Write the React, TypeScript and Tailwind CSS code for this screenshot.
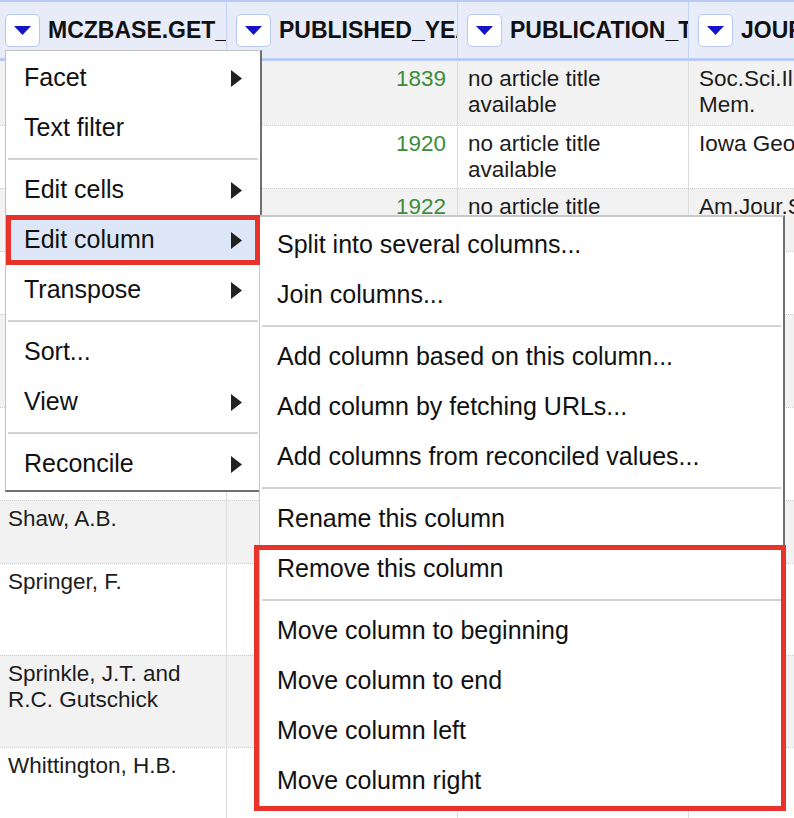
import React from 'react';

type Row = {
  h: string;
  gray: boolean;
  first?: boolean;
  name: string;
  year: string;
  title: string;
  journal: string;
};

const rows: Row[] = [
  { h: 'h-[64px]', gray: true, first: true, name: 'Owen, D.D.', year: '1839', title: 'no article title available', journal: 'Soc.Sci.Illinois Mem.' },
  { h: 'h-[63px]', gray: false, name: 'Weller, S.', year: '1920', title: 'no article title available', journal: 'Iowa Geol. Surv.' },
  { h: 'h-[63px]', gray: true, name: 'Weller, S.', year: '1922', title: 'no article title available', journal: 'Am.Jour.Sci.' },
  { h: 'h-[63px]', gray: false, name: 'Moore, R.C.', year: '1950', title: 'no article title available', journal: '' },
  { h: 'h-[93px]', gray: true, name: 'Ubaghs, G. and R.C. Moore', year: '1967', title: 'no article title available', journal: '' },
  { h: 'h-[93px]', gray: false, name: 'Bather, F.A. and E. Kirk', year: '1900', title: 'no article title available', journal: '' },
  { h: 'h-[63px]', gray: true, name: 'Shaw, A.B.', year: '', title: '', journal: '' },
  { h: 'h-[92px]', gray: false, name: 'Springer, F.', year: '', title: '', journal: '' },
  { h: 'h-[92px]', gray: true, name: 'Sprinkle, J.T. and R.C. Gutschick', year: '', title: '', journal: '' },
  { h: 'h-[92px]', gray: false, name: 'Whittington, H.B.', year: '', title: '', journal: '' },
];

const DownArrow = () => (
  <span className="flex h-[33px] w-[35px] shrink-0 items-center justify-center rounded-[5px] border border-[#b7c8f1] bg-white">
    <svg width="17" height="9" viewBox="0 0 17 9">
      <path d="M0 0H17L8.5 9Z" fill="#1414c6" />
    </svg>
  </span>
);

const RightArrow = () => (
  <svg width="11" height="17" viewBox="0 0 11 17">
    <path d="M0 0L11 8.5L0 17Z" fill="#222" />
  </svg>
);

const HeaderCell = ({ label, first, last }: { label: string; first?: boolean; last?: boolean }) => (
  <div
    className={`flex items-center gap-[8px] overflow-hidden whitespace-nowrap ${first ? 'pl-[5px]' : 'pl-[9px]'} ${last ? '' : 'border-r border-[#c4d3f5]'}`}
  >
    <DownArrow />
    <span className="text-[23px] font-bold text-[#111]">{label}</span>
  </div>
);

const Sep = ({ inset }: { inset: string }) => <div className={`${inset} my-[5px] h-[2px] bg-[#d2d2d2]`} />;

const MenuItem = ({ label, sub }: { label: string; sub?: boolean }) => (
  <div className="flex h-[50px] items-center justify-between pl-[18px] pr-[18px] text-[25px] text-[#111]">
    <span>{label}</span>
    {sub && <RightArrow />}
  </div>
);

const SubItem = ({ label }: { label: string }) => (
  <div className="flex h-[50px] items-center pl-[17px] text-[25px] text-[#111] whitespace-nowrap">{label}</div>
);

export default function App() {
  return (
    <div className="relative h-[818px] w-[794px] overflow-hidden bg-white font-['Liberation_Sans',Arial,sans-serif]">
      {/* table */}
      <div className="w-[889px]">
        <div className="grid h-[61px] grid-cols-[227px_231px_231px_200px] border-t-2 border-b-[3px] border-[#b9cbf4] bg-[#e8ebf8]">
          <HeaderCell label="MCZBASE.GET_AUTHORS" first />
          <HeaderCell label="PUBLISHED_YEAR" />
          <HeaderCell label="PUBLICATION_TITLE" />
          <HeaderCell label="JOURNAL_NAME" last />
        </div>
        {rows.map((r, i) => (
          <div
            key={i}
            className={`grid grid-cols-[227px_231px_231px_200px] text-[22.5px] leading-[26px] text-[#1c1c1c] ${r.h} ${r.gray ? 'bg-[#f2f2f2]' : 'bg-white'} ${r.first ? '' : 'border-t border-dotted border-[#c9c9c9]'}`}
          >
            <div className="overflow-hidden border-r border-[#dcdcdc] pl-[8px] pr-[8px] pt-[5px]">{r.name}</div>
            <div className="overflow-hidden border-r border-[#dcdcdc] pr-[11px] pt-[5px] text-right text-[#3d8c3a]">{r.year}</div>
            <div className="overflow-hidden border-r border-[#dcdcdc] pl-[10px] pr-[10px] pt-[5px]">{r.title}</div>
            <div className="overflow-hidden pl-[10px] pr-[10px] pt-[5px]">{r.journal}</div>
          </div>
        ))}
      </div>

      {/* column menu */}
      <div className="absolute left-[5px] top-[50px] w-[257px] border-t border-l border-r-2 border-b-2 border-t-[#c3c3c3] border-l-[#c3c3c3] border-r-[#6f6f6f] border-b-[#6f6f6f] bg-white pt-[2px] pb-[1px]">
        <MenuItem label="Facet" sub />
        <MenuItem label="Text filter" />
        <Sep inset="mx-[2px]" />
        <MenuItem label="Edit cells" sub />
        <div className="relative bg-[#dce6f6]">
          <MenuItem label="Edit column" sub />
          <span className="pointer-events-none absolute inset-0 z-20 border-[5px] border-[#e8332a]" />
        </div>
        <MenuItem label="Transpose" sub />
        <Sep inset="mx-[2px]" />
        <MenuItem label="Sort..." />
        <MenuItem label="View" sub />
        <Sep inset="mx-[2px]" />
        <MenuItem label="Reconcile" sub />
      </div>

      {/* edit column submenu */}
      <div className="absolute left-[259px] top-[215px] z-10 w-[526px] border-t-2 border-l border-r-2 border-b-2 border-t-[#c8c8c8] border-l-[#c8c8c8] border-r-[#6f6f6f] border-b-[#6f6f6f] bg-white pt-[3px] pb-[3px]">
        <SubItem label="Split into several columns..." />
        <SubItem label="Join columns..." />
        <Sep inset="mx-[2px]" />
        <SubItem label="Add column based on this column..." />
        <SubItem label="Add column by fetching URLs..." />
        <SubItem label="Add columns from reconciled values..." />
        <Sep inset="mx-[2px]" />
        <SubItem label="Rename this column" />
        <div className="relative">
          <SubItem label="Remove this column" />
          <Sep inset="mx-[2px]" />
          <SubItem label="Move column to beginning" />
          <SubItem label="Move column to end" />
          <SubItem label="Move column left" />
          <SubItem label="Move column right" />
          <span className="pointer-events-none absolute -left-[6px] -right-[3px] top-[1px] -bottom-[5px] z-20 border-[5px] border-[#e8332a]" />
        </div>
      </div>
    </div>
  );
}
